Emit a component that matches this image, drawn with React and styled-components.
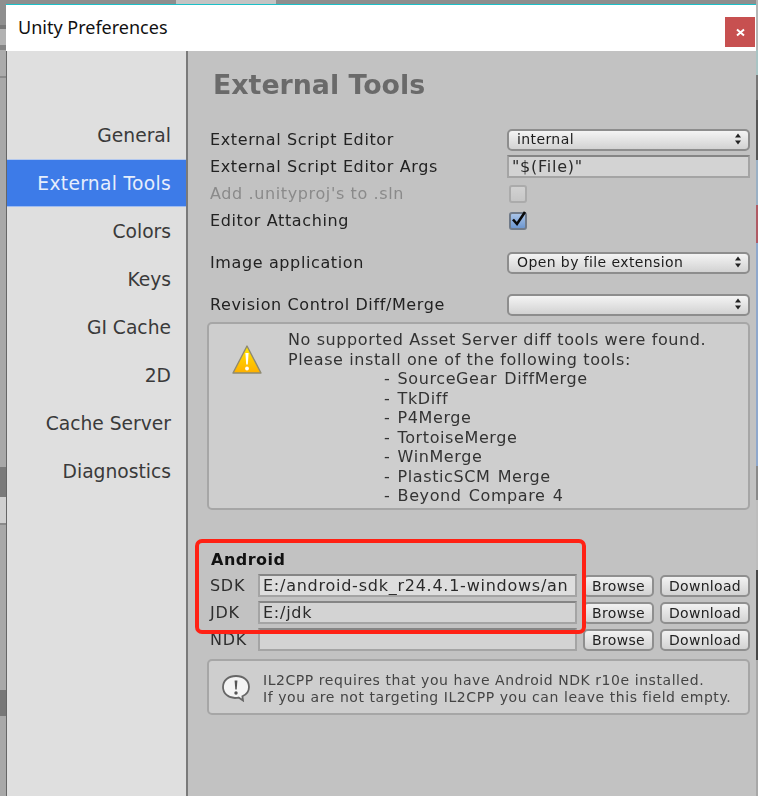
import styled, { createGlobalStyle } from 'styled-components';

const GlobalStyle = createGlobalStyle`
  html, body {
    margin: 0;
    height: 100%;
    overflow: hidden;
  }
`;

const NAV_ITEMS = ['General', 'External Tools', 'Colors', 'Keys', 'GI Cache', '2D', 'Cache Server', 'Diagnostics'];
const MERGE_TOOLS = ['SourceGear DiffMerge', 'TkDiff', 'P4Merge', 'TortoiseMerge', 'WinMerge', 'PlasticSCM Merge', 'Beyond Compare 4'];
const SDK_ROWS = [
  { label: 'SDK', value: 'E:/android-sdk_r24.4.1-windows/an', light: true },
  { label: 'JDK', value: 'E:/jdk' },
  { label: 'NDK', value: '' },
];

// the desktop showing round the window is only ever a sliver, so it is painted as a background
const Desktop = styled.div`
  width: 758px;
  height: 796px;
  box-sizing: border-box;
  padding: 4px 2px 0 6px;
  background-color: #a8a8a8;
  background-repeat: no-repeat;
  background-position: 0 0, 756px 0, 0 0;
  background-size: 6px 796px, 2px 796px, 758px 4px;
  background-image:
    linear-gradient(180deg,
      #8f8f8f 0 25px, #777 25px 29px, #b2b2b2 29px 45px, #858585 45px 50px, #ababab 50px 76px,
      #8a8a8a 76px 78px, #a8a8a8 78px 467px, #7a7a7a 467px 497px, #d0d0d0 497px 523px,
      #8a8a8a 523px 525px, #a8a8a8 525px 690px, #777 690px 716px, #a8a8a8 716px),
    linear-gradient(180deg,
      #b5b5b5 0 50px, #a9c4c4 50px 75px, #777 75px 100px, #565656 100px 160px, #9ab0c4 160px 205px,
      #b05a64 205px 243px, #8fa8cc 243px 466px, #8a8a8a 466px 500px, #bdbdbd 500px 570px,
      #474747 570px 660px, #a8a8a8 660px),
    linear-gradient(90deg, #8e8e8e 0 176px, #c4c4c4 176px 276px, #8e8e8e 276px);
`;

const Window = styled.div`
  height: 792px;
  display: flex;
  flex-direction: column;
  border-top: 1px solid #1cc0c8;
`;

const TitleBar = styled.header`
  height: 46px;
  flex: none;
  display: flex;
  justify-content: space-between;
  background: #fff;
`;

const WindowTitle = styled.h1`
  margin: 0;
  padding: 9px 0 0 12px;
  font: 400 18px/27px 'Noto Sans', sans-serif;
  color: #111;
`;

const CloseButton = styled.button`
  width: 30px;
  height: 30px;
  margin: 12px 1px 0 0;
  padding: 0;
  border: 0;
  display: flex;
  align-items: center;
  justify-content: center;
  background: #c75050;
`;

const Body = styled.div`
  flex: 1;
  display: flex;
  min-height: 0;
  font-family: 'DejaVu Sans', sans-serif;
`;

const Sidebar = styled.nav`
  width: 179px;
  flex: none;
  padding-top: 60px;
  border-left: 1px solid #666;
  border-right: 2px solid #7a7a7a;
  background: #dfdfdf;
`;

const NavItem = styled.div`
  height: 48px;
  box-sizing: border-box;
  padding-right: 15px;
  display: flex;
  align-items: center;
  justify-content: flex-end;
  font-size: 18.7px;
  letter-spacing: ${(p) => (p.$active ? '0.3px' : '0')};
  color: ${(p) => (p.$active ? '#e6eefc' : '#3a3a3a')};
  background: ${(p) => (p.$active ? '#3d7be8' : 'transparent')};
  box-shadow: ${(p) => (p.$active ? 'inset 0 1px 0 #b3c8ee, inset 0 -1px 0 #9fbcf0' : 'none')};
`;

const Panel = styled.main`
  position: relative;
  flex: 1;
  background: #c2c2c2;
`;

const PanelContent = styled.div`
  padding: 19px 6px 0 22px;
  filter: blur(0.35px);
`;

const Heading = styled.h2`
  margin: 0 0 26px 3px;
  font-size: 26.8px;
  line-height: 30px;
  font-weight: 700;
  color: #6a6a6a;
`;

const Row = styled.div`
  height: 27px;
  margin-top: ${(p) => p.$gap || 0}px;
  display: flex;
  align-items: center;
`;

const Label = styled.span`
  width: 297px;
  flex: none;
  font-size: 16px;
  letter-spacing: 0.62px;
  white-space: nowrap;
  color: ${(p) => (p.$disabled ? '#8a8a8a' : '#222')};
`;

const Select = styled.div`
  width: 243px;
  height: 22px;
  box-sizing: border-box;
  padding: 0 6px 1px 8px;
  display: flex;
  align-items: center;
  justify-content: space-between;
  border: 2px solid #8d8d8d;
  border-radius: 5px;
  font-size: 14px;
  letter-spacing: 0.4px;
  color: #1c1c1c;
  background: linear-gradient(180deg, #f4f4f4, #d2d2d2);
`;

const TextField = styled.div`
  height: 23px;
  box-sizing: border-box;
  padding-left: 3px;
  display: flex;
  align-items: center;
  border: 2px solid #a4a4a4;
  border-top-color: #858585;
  font-size: 16px;
  letter-spacing: 0.75px;
  white-space: nowrap;
  overflow: hidden;
  color: #2a2a2a;
  background: ${(p) => (p.$light ? '#dedede' : '#d3d3d3')};
  width: ${(p) => p.$width}px;
`;

const Checkbox = styled.div`
  width: 18px;
  height: 18px;
  margin-left: 2px;
  box-sizing: border-box;
  display: flex;
  align-items: center;
  justify-content: center;
  border: 2px solid ${(p) => (p.$checked ? '#707a88' : '#ababab')};
  border-radius: 3px;
  background: ${(p) => (p.$checked ? 'linear-gradient(180deg, #a9c4e8, #6d97d0)' : 'linear-gradient(180deg, #d2d2d2, #c6c6c6)')};
`;

const HelpBox = styled.section`
  width: 543px;
  margin: 4px 0 0 -3px;
  box-sizing: border-box;
  display: flex;
  border: 2px solid #a6a6a6;
  border-radius: 5px;
  background: #cecece;
  color: #333;
`;

const WarningBox = styled(HelpBox)`
  height: 188px;
  padding: 6px 0 0 22px;
  font-size: 16px;
  line-height: 19.5px;
  letter-spacing: 0.6px;
`;

const IconSlot = styled.div`
  width: 57px;
  flex: none;
  padding-top: 14px;
`;

const HelpText = styled.div`
  white-space: nowrap;
`;

const ToolList = styled.ul`
  margin: 0;
  padding: 0 0 0 96px;
  list-style: none;
  word-spacing: 1.5px;
`;

const AndroidTitle = styled.h3`
  margin: 40px 0 2px 1px;
  font-size: 16px;
  line-height: 20px;
  font-weight: 700;
  letter-spacing: 0.5px;
  color: #111;
`;

const SdkLabel = styled.span`
  width: 48px;
  flex: none;
  font-size: 16px;
  letter-spacing: 0.7px;
  color: #2e2e2e;
`;

const ToolButton = styled.button`
  height: 22px;
  width: ${(p) => p.$width}px;
  margin-left: 6px;
  padding: 0;
  box-sizing: border-box;
  border: 2px solid #8f8f8f;
  border-radius: 5px;
  font-family: inherit;
  font-size: 14px;
  letter-spacing: 0.3px;
  color: #222;
  background: linear-gradient(180deg, #f2f2f2, #d2d2d2);
`;

const InfoBox = styled(HelpBox)`
  height: 56px;
  margin-top: 6px;
  padding: 11px 0 0 12px;
  font-size: 14px;
  line-height: 17px;
  letter-spacing: 0.56px;
  color: #444;
`;

const InfoIconSlot = styled.div`
  width: 42px;
  flex: none;
  padding-top: 2px;
`;

// annotation somebody drew on the screenshot, so it lies over the panel
const Annotation = styled.div`
  position: absolute;
  left: 7px;
  top: 488px;
  width: 391px;
  height: 95px;
  box-sizing: border-box;
  border: 4px solid #ff2114;
  border-radius: 7px;
  pointer-events: none;
`;

const SelectArrows = () => (
  <svg width="8" height="12" viewBox="0 0 8 12">
    <path d="M4 0.5 7 4.5H1Z M4 11.5 1 7.5H7Z" fill="#222" />
  </svg>
);

const CheckMark = () => (
  <svg width="18" height="18" viewBox="0 0 18 18" style={{ margin: '-3px -1px 0 0', flex: 'none' }}>
    <path d="M3 9.5 7 14 15 2" fill="none" stroke="#0a0a0a" strokeWidth="2.6" />
  </svg>
);

const WarningIcon = () => (
  <svg width="32" height="32" viewBox="0 0 32 32">
    <defs>
      <linearGradient id="warn" x1="0" y1="0" x2="0" y2="1">
        <stop offset="0" stopColor="#ffe600" />
        <stop offset="1" stopColor="#ffb000" />
      </linearGradient>
    </defs>
    <path d="M16 2 30 29H2Z" fill="url(#warn)" stroke="#8f8a70" strokeWidth="1.4" strokeLinejoin="round" />
    <path d="M14.4 9H17.6L16.800 20.500H15.200Z" fill="#fff" />
    <circle cx="16" cy="24.500" r="1.900" fill="#fff" />
  </svg>
);

const BubbleIcon = () => (
  <svg width="30" height="28" viewBox="0 0 30 28">
    <path
      d="M15 2C7.5 2 2 6.5 2 13s5.5 11 12 11c1.5 0 2.5-.1 3.6-.4L22 26.5l-.6-4.2C25.600 20.400 28 17 28 13 28 6.500 22.500 2 15 2Z"
      fill="#f4f4f4"
      stroke="#666"
      strokeWidth="1.8"
    />
    <path d="M13.600 6.500H16.400L15.700 15.500H14.300Z" fill="#555" />
    <circle cx="15" cy="19" r="1.700" fill="#555" />
  </svg>
);

const CloseGlyph = () => (
  <svg width="9" height="9" viewBox="0 0 9 9">
    <path d="M1 1.500 8 7.500M8 1.500 1 7.500" stroke="#fff" strokeWidth="2" />
  </svg>
);

export default function App() {
  return (
    <>
      <GlobalStyle />
      <Desktop>
        <Window>
          <TitleBar>
            <WindowTitle>Unity Preferences</WindowTitle>
            <CloseButton aria-label="Close">
              <CloseGlyph />
            </CloseButton>
          </TitleBar>
          <Body>
            <Sidebar>
              {NAV_ITEMS.map((item) => (
                <NavItem key={item} $active={item === 'External Tools'}>
                  {item}
                </NavItem>
              ))}
            </Sidebar>
            <Panel>
              <PanelContent>
                <Heading>External Tools</Heading>
                <Row>
                  <Label>External Script Editor</Label>
                  <Select>
                    internal
                    <SelectArrows />
                  </Select>
                </Row>
                <Row>
                  <Label>External Script Editor Args</Label>
                  <TextField $width={243}>"$(File)"</TextField>
                </Row>
                <Row>
                  <Label $disabled>Add .unityproj's to .sln</Label>
                  <Checkbox />
                </Row>
                <Row>
                  <Label>Editor Attaching</Label>
                  <Checkbox $checked>
                    <CheckMark />
                  </Checkbox>
                </Row>
                <Row $gap={15}>
                  <Label>Image application</Label>
                  <Select>
                    Open by file extension
                    <SelectArrows />
                  </Select>
                </Row>
                <Row $gap={15}>
                  <Label>Revision Control Diff/Merge</Label>
                  <Select>
                    <span />
                    <SelectArrows />
                  </Select>
                </Row>
                <WarningBox>
                  <IconSlot>
                    <WarningIcon />
                  </IconSlot>
                  <HelpText>
                    No supported Asset Server diff tools were found.
                    <br />
                    Please install one of the following tools:
                    <ToolList>
                      {MERGE_TOOLS.map((tool) => (
                        <li key={tool}>- {tool}</li>
                      ))}
                    </ToolList>
                  </HelpText>
                </WarningBox>
                <AndroidTitle>Android</AndroidTitle>
                {SDK_ROWS.map(({ label, value, light }) => (
                  <Row key={label}>
                    <SdkLabel>{label}</SdkLabel>
                    <TextField $width={319} $light={light}>
                      {value}
                    </TextField>
                    <ToolButton $width={71}>Browse</ToolButton>
                    <ToolButton $width={90}>Download</ToolButton>
                  </Row>
                ))}
                <InfoBox>
                  <InfoIconSlot>
                    <BubbleIcon />
                  </InfoIconSlot>
                  <HelpText>
                    IL2CPP requires that you have Android NDK r10e installed.
                    <br />
                    If you are not targeting IL2CPP you can leave this field empty.
                  </HelpText>
                </InfoBox>
              </PanelContent>
              <Annotation />
            </Panel>
          </Body>
        </Window>
      </Desktop>
    </>
  );
}
